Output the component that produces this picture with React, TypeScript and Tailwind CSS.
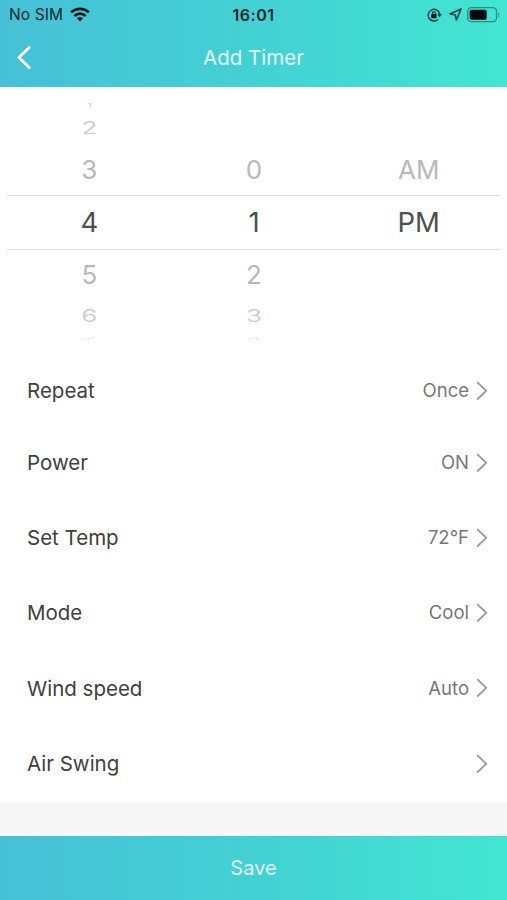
import React from 'react';
import { clsx } from 'clsx';

interface WheelItem {
  label: string;
  offset: number;
}

interface SettingRow {
  label: string;
  value?: string;
  height: string;
}

const hours: WheelItem[] = [
  { label: '1', offset: -3 },
  { label: '2', offset: -2 },
  { label: '3', offset: -1 },
  { label: '4', offset: 0 },
  { label: '5', offset: 1 },
  { label: '6', offset: 2 },
  { label: '7', offset: 3 },
];

const minutes: WheelItem[] = [
  { label: '', offset: -3 },
  { label: '', offset: -2 },
  { label: '0', offset: -1 },
  { label: '1', offset: 0 },
  { label: '2', offset: 1 },
  { label: '3', offset: 2 },
  { label: '4', offset: 3 },
];

const periods: WheelItem[] = [
  { label: '', offset: -3 },
  { label: '', offset: -2 },
  { label: 'AM', offset: -1 },
  { label: 'PM', offset: 0 },
];

const settings: SettingRow[] = [
  { label: 'Repeat', value: 'Once', height: 'h-[68px]' },
  { label: 'Power', value: 'ON', height: 'h-[75px]' },
  { label: 'Set Temp', value: '72°F', height: 'h-[75.4px]' },
  { label: 'Mode', value: 'Cool', height: 'h-[75.4px]' },
  { label: 'Wind speed', value: 'Auto', height: 'h-[75.4px]' },
  { label: 'Air Swing', height: 'h-[75.4px]' },
];

// Rows get flatter and paler the further they are from the selected one
const rowStyles: Record<string, string> = {
  '-3': 'h-[15px] text-[26px] text-[#d4d4d4]',
  '-2': 'h-8 text-[26px] text-[#cfcfcf]',
  '-1': 'h-[51px] text-[26px] text-[#b9b9b9]',
  '0': 'h-[55px] border-y border-[#e0e0e0] text-[27.5px] text-[#4f4f4f]',
  '1': 'h-[50px] text-[26px] text-[#b9b9b9]',
  '2': 'h-8 text-[26px] text-[#cfcfcf]',
  '3': 'h-[13px] text-[26px] text-[#e6e6e6]',
};

const squash: Record<string, string> = {
  '-3': 'scale-x-50 scale-y-[0.2]',
  '-2': 'scale-y-[0.65]',
  '2': 'scale-y-[0.65]',
  '3': 'scale-x-90 scale-y-[0.12]',
};

function Wheel({ items }: { items: WheelItem[] }) {
  return (
    <div className="flex flex-1 flex-col">
      {items.map((item) => (
        <div
          key={item.offset}
          className={clsx('flex shrink-0 items-center justify-center leading-none', rowStyles[item.offset])}
        >
          <span className={clsx('inline-block', squash[item.offset])}>{item.label}</span>
        </div>
      ))}
    </div>
  );
}

function StatusBar() {
  return (
    <div className="flex h-[29px] items-center pl-[9px] pr-[7px] text-[#07262b]">
      <div className="flex flex-1 items-center gap-[7px]">
        <span className="text-[15.5px] tracking-[0.1px]">No SIM</span>
        <svg width="20" height="15" viewBox="0 0 20 15" fill="none" stroke="#03191c" strokeWidth="2.7">
          <path d="M1.2 5.4a12.6 12.6 0 0 1 17.6 0" />
          <path d="M4.4 9a8 8 0 0 1 11.2 0" />
          <path d="M10 14.6 6.9 11.4a4.5 4.5 0 0 1 6.2 0Z" fill="#03191c" stroke="none" />
        </svg>
      </div>
      <span className="mr-[2px] text-[16px] font-semibold leading-[22px] tracking-[0.5px]">16:01</span>
      <div className="flex flex-1 items-center justify-end">
        <svg width="15" height="14" viewBox="0 0 15 14" fill="none" stroke="#07403f" strokeWidth="1.5">
          <path d="M11.2 11.2A5.8 5.8 0 1 1 12.7 6" />
          <path d="M10.4 6h4.4l-2.2 3.4Z" fill="#07403f" stroke="none" />
          <rect x="4.2" y="6.1" width="5.4" height="4.1" rx="0.6" fill="#03191c" stroke="none" />
          <path d="M5.4 6.6V5.3a1.5 1.5 0 0 1 3 0v1.3" strokeWidth="1.2" />
        </svg>
        <svg className="ml-[7px]" width="13" height="13" viewBox="0 0 13 13" fill="none" stroke="#07403f" strokeWidth="1.6" strokeLinejoin="round">
          <path d="M12 1 1 6l5.2.8L7.4 12Z" />
        </svg>
        <svg className="ml-[5px]" width="33" height="16" viewBox="0 0 33 16">
          <rect x="0.7" y="0.7" width="28.8" height="14" rx="3.6" fill="none" stroke="#238f88" strokeWidth="1.3" />
          <rect x="2.7" y="2.7" width="17" height="10" rx="1.6" fill="#020a0b" />
          <path d="M31 5.6c1.3.4 1.3 4.2 0 4.6Z" fill="#238f88" />
        </svg>
      </div>
    </div>
  );
}

export default function App() {
  return (
    <div className="flex h-[900px] w-[507px] flex-col overflow-hidden bg-white font-['Inter','Liberation_Sans',sans-serif]">
      <header className="h-[87px] shrink-0 bg-linear-to-r from-[#46c0d6] via-[#43d1d3] to-[#42e5d2]">
        <StatusBar />
        <div className="flex h-[58px] items-center px-[17px]">
          <button className="flex w-10">
            <svg width="16" height="26" viewBox="0 0 16 26" fill="none" stroke="white" strokeWidth="2.9">
              <path d="M13.2 1.5 2 12.5l11.2 11" />
            </svg>
          </button>
          <h1 className="flex-1 text-center text-[20.5px] text-[#e4fbfb]">Add Timer</h1>
          <div className="w-10" />
        </div>
      </header>

      {/* Time picker */}
      <div className="flex h-[270px] shrink-0 pl-[7px] pr-[6px] pt-[10px]">
        <Wheel items={hours} />
        <Wheel items={minutes} />
        <Wheel items={periods} />
      </div>

      {/* Settings */}
      <div className="shrink-0">
        {settings.map((row) => (
          <div key={row.label} className={clsx('flex items-center justify-between pl-[27px] pr-[19px]', row.height)}>
            <span className="pt-px text-[20.5px] text-[#404040]">{row.label}</span>
            <div className="flex items-center gap-[7px]">
              <span className="text-[18.5px] text-[#777777]">{row.value}</span>
              <svg width="12" height="20" viewBox="0 0 12 20" fill="none" stroke="#999999" strokeWidth="1.8">
                <path d="M1.2 1.1 10.2 9.8 1.2 18.5" />
              </svg>
            </div>
          </div>
        ))}
      </div>

      <div className="flex-1 bg-[#f7f7f7]" />
      <button className="h-16 shrink-0 bg-linear-to-r from-[#46c0d6] via-[#43d1d3] to-[#42e5d2] text-[20px] text-[#e4fbfb]">
        Save
      </button>
    </div>
  );
}
